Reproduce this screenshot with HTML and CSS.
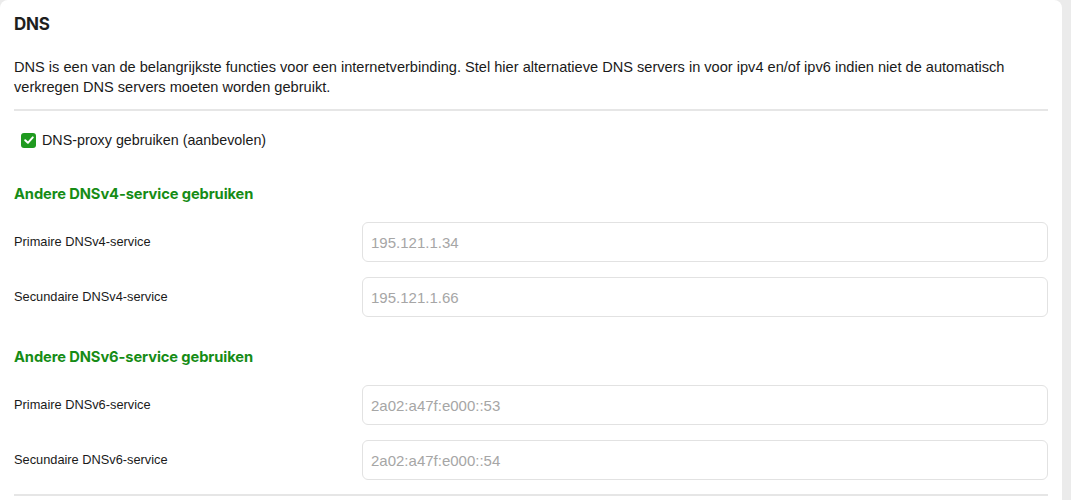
FILE: index.html
```html
<!DOCTYPE html>
<html lang="nl">
<head>
<meta charset="utf-8">
<link rel="stylesheet" href="styles.css">
</head>
<body>
<div class="card">
  <h1 class="title">DNS</h1>
  <p class="intro">DNS is een van de belangrijkste functies voor een internetverbinding. Stel hier alternatieve DNS servers in voor ipv4 en/of ipv6 indien niet de automatisch verkregen DNS servers moeten worden gebruikt.</p>
  <hr class="divider">
  <label class="check">
    <span class="box"><svg width="12" height="12" viewBox="0 0 12 12"><path d="M2.2 6.2 L4.9 8.8 L9.8 3.4" fill="none" stroke="#fff" stroke-width="2" stroke-linecap="round" stroke-linejoin="round"/></svg></span>
    <span>DNS-proxy gebruiken (aanbevolen)</span>
  </label>
  <h2 class="section">Andere DNSv4-service gebruiken</h2>
  <div class="row">
    <span class="label">Primaire DNSv4-service</span>
    <div class="input">195.121.1.34</div>
  </div>
  <div class="row">
    <span class="label">Secundaire DNSv4-service</span>
    <div class="input">195.121.1.66</div>
  </div>
  <h2 class="section second">Andere DNSv6-service gebruiken</h2>
  <div class="row">
    <span class="label">Primaire DNSv6-service</span>
    <div class="input">2a02:a47f:e000::53</div>
  </div>
  <div class="row">
    <span class="label">Secundaire DNSv6-service</span>
    <div class="input">2a02:a47f:e000::54</div>
  </div>
  <hr class="divider bottom">
</div>
</body>
</html>
```
FILE: styles.css
```css
html, body {
  margin: 0;
  padding: 0;
}
body {
  background: #ebebeb;
  font-family: "Liberation Sans", Arial, sans-serif;
  color: #222;
  height: 500px;
  overflow: hidden;
}
.card {
  width: 1034px;
  background: #fff;
  border-radius: 8px;
  padding: 12px 14px 20px 14px;
}
.title {
  margin: 0;
  font-family: "Inter", "Liberation Sans", sans-serif;
  font-size: 17px;
  font-weight: 700;
  line-height: 24px;
  color: #1e1e1e;
  letter-spacing: -0.2px;
}
.intro {
  margin: 21px 0 0 0;
  font-size: 14.6px;
  line-height: 20px;
  color: #1a1a1a;
}
.divider {
  border: 0;
  border-top: 2px solid #e6e6e6;
  margin: 12px 0 0 0;
  height: 0;
}
.check {
  display: flex;
  align-items: center;
  gap: 6px;
  margin: 19px 0 0 7px;
  font-size: 14.3px;
  line-height: 20px;
  color: #1a1a1a;
}
.box {
  width: 15px;
  height: 15px;
  border-radius: 3px;
  background: #1f9a1f;
  display: flex;
  align-items: center;
  justify-content: center;
}
.section {
  margin: 34px 0 0 0;
  font-family: "Inter", "Liberation Sans", sans-serif;
  font-size: 14.7px;
  font-weight: 700;
  line-height: 20px;
  color: #168c16;
  letter-spacing: -0.1px;
}
.section.second {
  margin-top: 30px;
}
.row {
  display: grid;
  grid-template-columns: 348px 1fr;
  align-items: center;
  margin-top: 18px;
}
.row + .row {
  margin-top: 15px;
}
.label {
  font-size: 12.8px;
  line-height: 16px;
  color: #1a1a1a;
}
.input {
  height: 38px;
  border: 1px solid #e2e2e2;
  border-radius: 6px;
  padding: 0 8px;
  display: flex;
  align-items: center;
  font-size: 15px;
  color: #a6a6a6;
}
.divider.bottom {
  margin-top: 14px;
}
```
